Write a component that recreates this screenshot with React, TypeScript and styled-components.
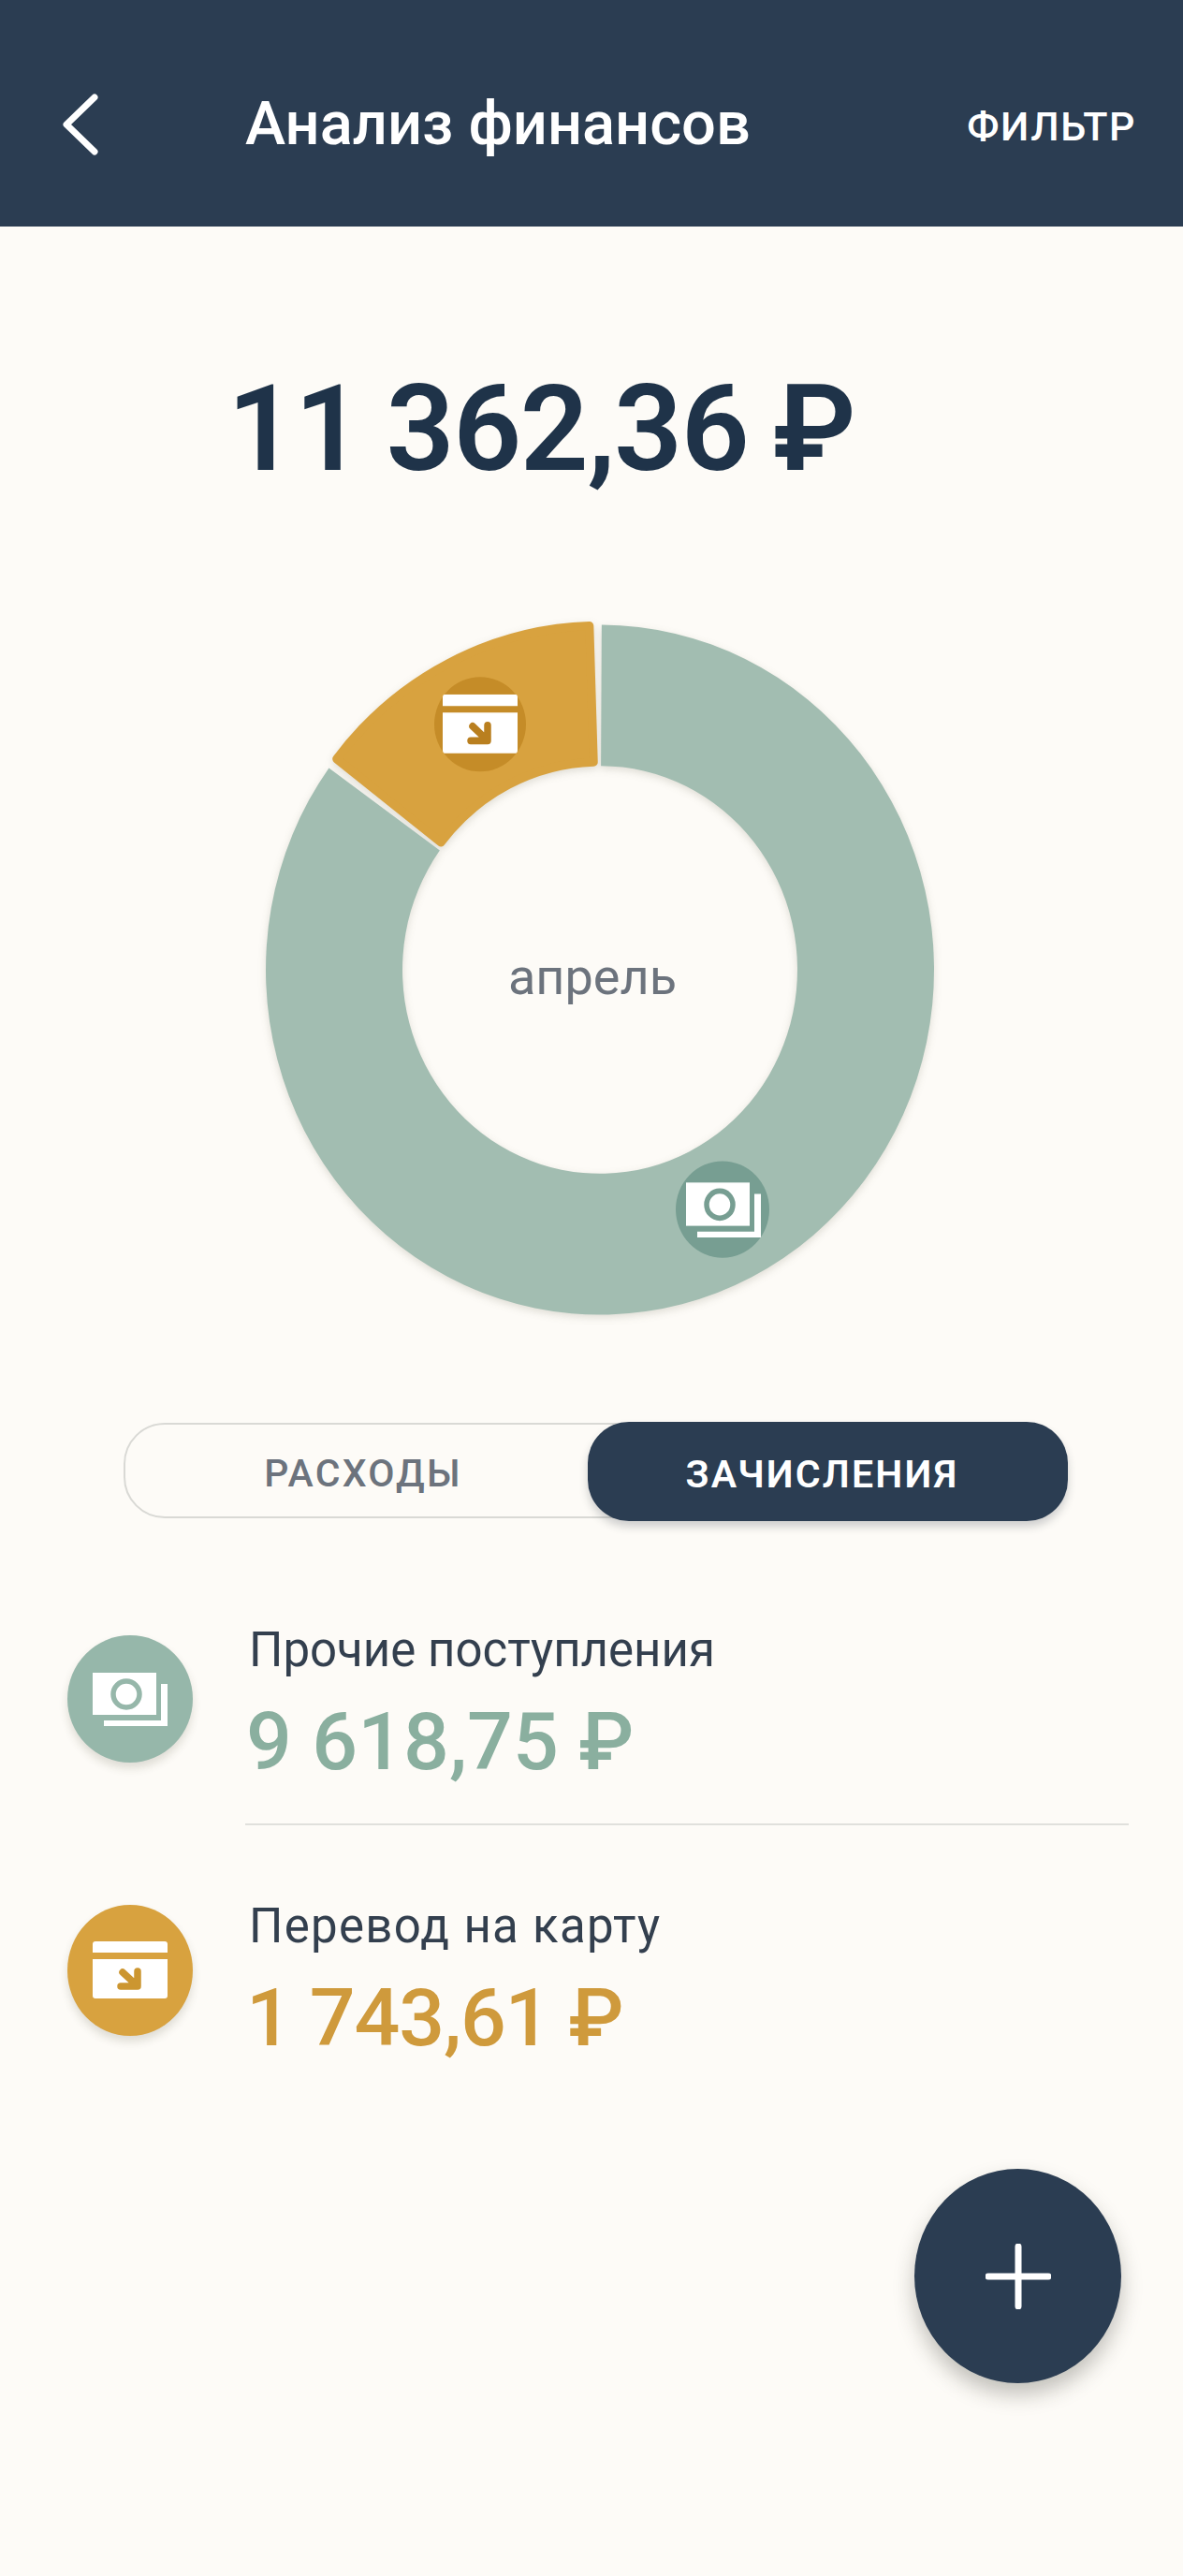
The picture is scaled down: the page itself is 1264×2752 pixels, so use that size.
import React from "react"
import styled, { createGlobalStyle } from "styled-components"

const GlobalStyle = createGlobalStyle`
    html, body {
        margin: 0;
        padding: 0;
        background: #fdfbf7;
        font-family: Roboto, "Liberation Sans", sans-serif;
    }
`

const Page = styled.div`
    position: relative;
    width: 1264px;
    height: 2752px;
    overflow: hidden;
    background: #fdfbf7;
`

const Header = styled.header`
    height: 242px;
    display: flex;
    align-items: center;
    padding: 0 50px 0 66px;
    box-sizing: border-box;
    background: #2b3d52;
    color: #fff;
`

const BackIcon = styled.svg`
    width: 42px;
    height: 66px;
    flex: none;
    margin-top: 23px;
`

const Title = styled.h1`
    flex: 1;
    margin: 22px 0 0 154px;
    font-size: 65px;
    line-height: 76px;
    font-weight: 500;
`

const FilterButton = styled.div`
    margin-top: 28px;
    font-size: 43px;
    line-height: 50px;
    font-weight: 500;
    letter-spacing: 1.5px;
`

const Total = styled.div`
    margin: 141px 0 0 243px;
    font-size: 128px;
    line-height: 150px;
    font-weight: 600;
    letter-spacing: -1.5px;
    word-spacing: -4px;
    color: #1f3349;
`

const DonutWrap = styled.div`
    position: relative;
    width: 740px;
    height: 764px;
    margin: 121px 0 0 271px;
`

const DonutSvg = styled.svg`
    display: block;
    width: 740px;
    height: 764px;
    overflow: visible;
    filter: drop-shadow(0 3px 4px rgba(60, 60, 40, 0.16));
`

const DonutLabel = styled.div`
    position: absolute;
    left: 0;
    right: 16px;
    top: 360px;
    text-align: center;
    font-size: 54px;
    line-height: 60px;
    color: #6c737d;
`

const Toggle = styled.div`
    display: flex;
    width: 1007px;
    height: 102px;
    margin: 102px 0 0 132px;
    box-sizing: border-box;
    border: 2px solid #d9d9d5;
    border-radius: 44px;
`

const ToggleItem = styled.div<{ $active?: boolean }>`
    flex: none;
    width: ${(p) => (p.$active ? "513px" : "494px")};
    height: ${(p) => (p.$active ? "106px" : "98px")};
    margin: ${(p) => (p.$active ? "-3px -2px 0 0" : "0")};
    display: flex;
    align-items: center;
    justify-content: center;
    box-sizing: border-box;
    padding: ${(p) => (p.$active ? "6px 12px 0 0" : "6px 0 0 14px")};
    font-size: 41px;
    font-weight: ${(p) => (p.$active ? 600 : 500)};
    letter-spacing: 2.2px;
    color: ${(p) => (p.$active ? "#fff" : "#6c737d")};
    background: ${(p) => (p.$active ? "#2b3d52" : "transparent")};
    border-radius: 44px;
    box-shadow: ${(p) => (p.$active ? "0 6px 10px rgba(40, 50, 60, 0.22)" : "none")};
`

const List = styled.div`
    margin: 111px 58px 0 72px;
    display: flex;
    flex-direction: column;
`

const Row = styled.div`
    display: flex;
    align-items: flex-start;
    margin-bottom: 78px;
`

const RowIcon = styled.div<{ $bg: string; $h: number; $top: number }>`
    flex: none;
    width: 134px;
    height: ${(p) => p.$h}px;
    margin-top: ${(p) => p.$top}px;
    display: flex;
    align-items: center;
    justify-content: center;
    border-radius: 50%;
    background: ${(p) => p.$bg};
    box-shadow: 0 6px 10px rgba(60, 60, 40, 0.16);
`

const RowBody = styled.div<{ $divider?: boolean }>`
    flex: 1;
    margin-left: 56px;
    padding: 0 0 ${(p) => (p.$divider ? "37px" : "0")} 6px;
    border-bottom: ${(p) => (p.$divider ? "2px solid #e0e0dc" : "none")};
`

const RowName = styled.div<{ $spacing?: number }>`
    margin-left: -2px;
    font-size: 51px;
    line-height: 60px;
    letter-spacing: ${(p) => p.$spacing || 0}px;
    color: #333f4e;
`

const RowAmount = styled.div<{ $color: string; $spacing?: number }>`
    margin: 18px 0 0 -5px;
    font-size: 86px;
    line-height: 100px;
    font-weight: 500;
    letter-spacing: ${(p) => p.$spacing || 0}px;
    color: ${(p) => p.$color};
`

const Fab = styled.div`
    position: absolute;
    left: 977px;
    top: 2317px;
    width: 221px;
    height: 229px;
    display: flex;
    align-items: center;
    justify-content: center;
    border-radius: 50%;
    background: #2b3d52;
    box-shadow: 0 12px 22px rgba(40, 40, 30, 0.28);
`

const PlusIcon = styled.svg`
    width: 70px;
    height: 70px;
`

interface IconProps {
    color: string
    x?: number
    y?: number
}

// card with a "money in" arrow
const CardIcon: React.FunctionComponent<IconProps> = (props: IconProps) => (
    <svg x={props.x} y={props.y} width="80" height="62" viewBox="0 0 80 62">
        <path d="M3 0h74a3 3 0 0 1 3 3v9H0V3a3 3 0 0 1 3-3z" fill="#fff" />
        <path d="M0 19h80v39a3 3 0 0 1-3 3H3a3 3 0 0 1-3-3z" fill="#fff" />
        <path d="M32 33l14 13M48 32v16H30" fill="none" stroke={props.color} strokeWidth="7.5" strokeLinecap="round" strokeLinejoin="round" />
    </svg>
)

const BillIcon: React.FunctionComponent<IconProps> = (props: IconProps) => (
    <svg x={props.x} y={props.y} width="80" height="57" viewBox="0 0 80 57">
        <rect x="0" y="0" width="68" height="45" fill="#fff" />
        <circle cx="36" cy="23" r="14" fill="#fff" stroke={props.color} strokeWidth="5.5" />
        <path d="M73 12h7v45H12v-6h61z" fill="#fff" />
    </svg>
)

const CX = 370
const CY = 370

function point(r: number, deg: number) {
    const a = (deg * Math.PI) / 180
    return `${(CX + r * Math.sin(a)).toFixed(2)} ${(CY - r * Math.cos(a)).toFixed(2)}`
}

function ringPath(outer: number, inner: number, from: number, to: number) {
    const large = to - from > 180 ? 1 : 0
    return [
        `M${point(outer, from)}`,
        `A${outer} ${outer} 0 ${large} 1 ${point(outer, to)}`,
        `L${point(inner, to)}`,
        `A${inner} ${inner} 0 ${large} 0 ${point(inner, from)}`,
        "Z"
    ].join(" ")
}

const App: React.FunctionComponent = () => {
    return <>
    <GlobalStyle />
    <Page>
        <Header>
            <BackIcon viewBox="0 0 42 66">
                <path d="M35 4L5 33l30 29" fill="none" stroke="#fff" strokeWidth="7" strokeLinecap="round" strokeLinejoin="round" />
            </BackIcon>
            <Title>Анализ финансов</Title>
            <FilterButton>ФИЛЬТР</FilterButton>
        </Header>

        <Total>11 362,36 ₽</Total>

        <DonutWrap>
            {/* the ring is a little taller than wide in the picture */}
            <DonutSvg viewBox="0 0 740 740" preserveAspectRatio="none">
                <path d={ringPath(357, 211, 0.3, 305.8)} fill="#a2bdb1" />
                <path d={ringPath(356, 215, -52.2, -1.8)} fill="#d8a23f" stroke="#d8a23f" strokeWidth="9" strokeLinejoin="round" />
                <circle cx="242" cy="116" r="49" fill="#c58c28" />
                <CardIcon x={202} y={85} color="#b97f1f" />
                <circle cx="501" cy="618" r="50" fill="#779e92" />
                <BillIcon x={462} y={590} color="#779e92" />
            </DonutSvg>
            <DonutLabel>апрель</DonutLabel>
        </DonutWrap>

        <Toggle>
            <ToggleItem>РАСХОДЫ</ToggleItem>
            <ToggleItem $active>ЗАЧИСЛЕНИЯ</ToggleItem>
        </Toggle>

        <List>
            <Row>
                <RowIcon $bg="#96b7aa" $h={136} $top={14}><BillIcon color="#96b7aa" /></RowIcon>
                <RowBody $divider>
                    <RowName>Прочие поступления</RowName>
                    <RowAmount $color="#8aaf9f">9 618,75 ₽</RowAmount>
                </RowBody>
            </Row>
            <Row>
                <RowIcon $bg="#d8a23f" $h={140} $top={7}><CardIcon color="#cc9630" /></RowIcon>
                <RowBody>
                    <RowName $spacing={1.3}>Перевод на карту</RowName>
                    <RowAmount $color="#cf9a3c" $spacing={-1.2}>1 743,61 ₽</RowAmount>
                </RowBody>
            </Row>
        </List>

        <Fab>
            <PlusIcon viewBox="0 0 70 70">
                <path d="M35 3v64M3 35h64" stroke="#fff" strokeWidth="7" strokeLinecap="round" />
            </PlusIcon>
        </Fab>
    </Page>
    </>
}

export default App
